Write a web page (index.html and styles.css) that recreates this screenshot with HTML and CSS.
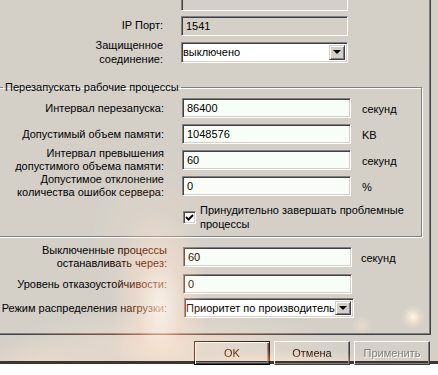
FILE: index.html
```html
<!DOCTYPE html>
<html lang="ru">
<head>
    <meta charset="UTF-8">
    <meta name="viewport" content="width=device-width, initial-scale=1.0">
    <title>Свойства процесса</title>
    <link rel="stylesheet" href="styles.css">
</head>
<body>
    <div class="dialog">
        <div class="page">
            <div class="form form-top">
                <span class="label"></span>
                <div class="field disabled"></div>

                <span class="label">IP Порт:</span>
                <div class="field disabled">1541</div>

                <span class="label two">Защищенное<br>соединение:</span>
                <div class="combo">
                    <span class="combo-text">выключено</span>
                    <span class="combo-btn"><i class="arrow"></i></span>
                </div>
            </div>

            <fieldset class="group">
                <legend>Перезапускать рабочие процессы</legend>
                <div class="form form-group">
                    <span class="label">Интервал перезапуска:</span>
                    <div class="field">86400</div>
                    <span class="unit">секунд</span>

                    <span class="label">Допустимый объем памяти:</span>
                    <div class="field">1048576</div>
                    <span class="unit">KB</span>

                    <span class="label two">Интервал превышения<br>допустимого объема памяти:</span>
                    <div class="field">60</div>
                    <span class="unit">секунд</span>

                    <span class="label two">Допустимое отклонение<br>количества ошибок сервера:</span>
                    <div class="field">0</div>
                    <span class="unit">%</span>
                </div>
                <div class="check">
                    <span class="check-box">
                        <svg width="9" height="9" viewBox="0 0 9 9"><polyline points="1,4 3.5,6.5 8,2" fill="none" stroke="#000" stroke-width="2"/></svg>
                    </span>
                    <span class="check-text">Принудительно завершать проблемные<br>процессы</span>
                </div>
            </fieldset>

            <div class="form form-bottom">
                <span class="label two">Выключенные процессы<br>останавливать через:</span>
                <div class="field">60</div>
                <span class="unit">секунд</span>

                <span class="label">Уровень отказоустойчивости:</span>
                <div class="field">0</div>
                <span></span>

                <span class="label">Режим распределения нагрузки:</span>
                <div class="combo combo-wide">
                    <span class="combo-text">Приоритет по производительности</span>
                    <span class="combo-btn"><i class="arrow"></i></span>
                </div>
                <span></span>
            </div>
        </div>

        <div class="buttons">
            <button class="btn default">OK</button>
            <button class="btn">Отмена</button>
            <button class="btn" disabled>Применить</button>
        </div>
    </div>
</body>
</html>
```

FILE: styles.css
```css
html, body {
    margin: 0;
    padding: 0;
}
body {
    width: 438px;
    height: 375px;
    overflow: hidden;
    font-family: "Liberation Sans", Arial, sans-serif;
    font-size: 11px;
    color: #000;
}
.dialog {
    position: relative;
    height: 375px;
    box-sizing: border-box;
    border-bottom: 3px solid #3e3430;
    background: #d4d0c8;
}
/* warm glow shining through the window */
.dialog::after {
    content: "";
    position: absolute;
    inset: 0;
    pointer-events: none;
    mix-blend-mode: screen;
    background:
        radial-gradient(circle 12px at 413px 328px, rgba(255, 215, 170, .95), rgba(230, 110, 40, .4) 60%, rgba(0, 0, 0, 0)),
        radial-gradient(circle 10px at 362px 336px, rgba(230, 120, 50, .5), rgba(0, 0, 0, 0)),
        radial-gradient(ellipse 120px 16px at 280px 377px, rgba(245, 120, 40, .9), rgba(0, 0, 0, 0)),
        radial-gradient(ellipse 48px 95px at 160px 318px, rgba(255, 205, 170, .85), rgba(230, 100, 40, .45) 50%, rgba(0, 0, 0, 0)),
        radial-gradient(ellipse 170px 40px at 170px 360px, rgba(235, 105, 40, .6), rgba(0, 0, 0, 0)),
        radial-gradient(ellipse 60px 80px at 150px 255px, rgba(220, 80, 20, .3), rgba(0, 0, 0, 0)),
        radial-gradient(ellipse 70px 20px at 40px 372px, rgba(220, 90, 30, .45), rgba(0, 0, 0, 0));
}
.page {
    width: 431px;
    box-sizing: border-box;
    margin-top: -11px;
    padding-bottom: 16px;
    border-right: 1px solid #404040;
    border-bottom: 1px solid #404040;
    box-shadow: inset -1px -1px 0 #808080;
}

/* form grids */
.form {
    display: grid;
    align-items: center;
}
.form-top {
    grid-template-columns: 181px 167px;
    grid-template-rows: 24px 25px 28px;
}
.form-group {
    grid-template-columns: 181px 180px auto;
    grid-auto-rows: 26px;
}
.form-bottom {
    margin-top: 7px;
    grid-template-columns: 183px 178px auto;
    grid-template-rows: 26px 28px 20px;
}
.label {
    text-align: right;
    padding-right: 18px;
    line-height: 13px;
    white-space: nowrap;
}
.form-top .label.two {
    line-height: 14px;
}
.form-bottom .label {
    padding-right: 16px;
}
.unit {
    line-height: 13px;
    padding-top: 3px;
}

/* sunken text field */
.field {
    width: 169px;
    height: 20px;
    box-sizing: border-box;
    padding: 3px 4px 0;
    line-height: 13px;
    background: #f9fdf7;
    border: 1px solid;
    border-color: #808080 #fff #fff #808080;
    box-shadow: inset 1px 1px 0 #404040, inset -1px -1px 0 #d4d0c8;
    overflow: hidden;
    white-space: nowrap;
}
.form-top .field {
    width: 167px;
}
.field.disabled {
    background: #d4d0c8;
}

/* combo box */
.combo {
    width: 167px;
    height: 21px;
    box-sizing: border-box;
    display: flex;
    align-items: center;
    padding: 2px;
    background: #fff;
    border: 1px solid;
    border-color: #808080 #fff #fff #808080;
    box-shadow: inset 1px 1px 0 #404040, inset -1px -1px 0 #d4d0c8;
}
.combo-wide {
    width: 170px;
    height: 20px;
    margin-left: 1px;
}
.combo-text {
    flex: 1;
    overflow: hidden;
    white-space: nowrap;
    line-height: 13px;
    margin-left: -1px;
    padding-top: 1px;
}
.combo-btn {
    width: 16px;
    height: 100%;
    box-sizing: border-box;
    display: flex;
    align-items: center;
    justify-content: center;
    background: #d4d0c8;
    border: 1px solid;
    border-color: #d4d0c8 #404040 #404040 #d4d0c8;
    box-shadow: inset 1px 1px 0 #fff, inset -1px -1px 0 #808080;
}
.arrow {
    width: 0;
    height: 0;
    border-left: 4px solid transparent;
    border-right: 4px solid transparent;
    border-top: 4px solid #000;
}

/* group box */
.group {
    margin: 14px 8px 0 -5px;
    padding: 1px 0 5px 5px;
    border: 1px solid #808080;
    box-shadow: 1px 1px 0 #fff, inset 1px 1px 0 #fff;
}
.group legend {
    margin-left: 2px;
    padding: 0 2px;
    line-height: 14px;
}
.check {
    display: flex;
    align-items: center;
    margin: 4px 0 0 182px;
    line-height: 14px;
}
.check-box {
    width: 13px;
    height: 13px;
    box-sizing: border-box;
    display: flex;
    align-items: center;
    justify-content: center;
    background: #fff;
    border: 1px solid;
    border-color: #808080 #fff #fff #808080;
    box-shadow: inset 1px 1px 0 #404040, inset -1px -1px 0 #d4d0c8;
}
.check-text {
    margin-left: 4px;
    white-space: nowrap;
}

/* buttons */
.buttons {
    display: flex;
    justify-content: flex-end;
    gap: 4px;
    margin-top: 6px;
    padding-right: 8px;
}
.btn {
    width: 76px;
    height: 24px;
    padding: 0;
    font-family: inherit;
    font-size: 11px;
    color: #000;
    background: transparent;
    border: 1px solid;
    border-color: #fff #404040 #404040 #fff;
    box-shadow: inset -1px -1px 0 #808080;
}
.btn.default {
    border-color: #000;
    box-shadow: inset 1px 1px 0 #fff, inset -1px -1px 0 #404040, inset -2px -2px 0 #808080;
}
.btn:disabled {
    color: #808080;
    text-shadow: 1px 1px 0 #fff;
}
```
